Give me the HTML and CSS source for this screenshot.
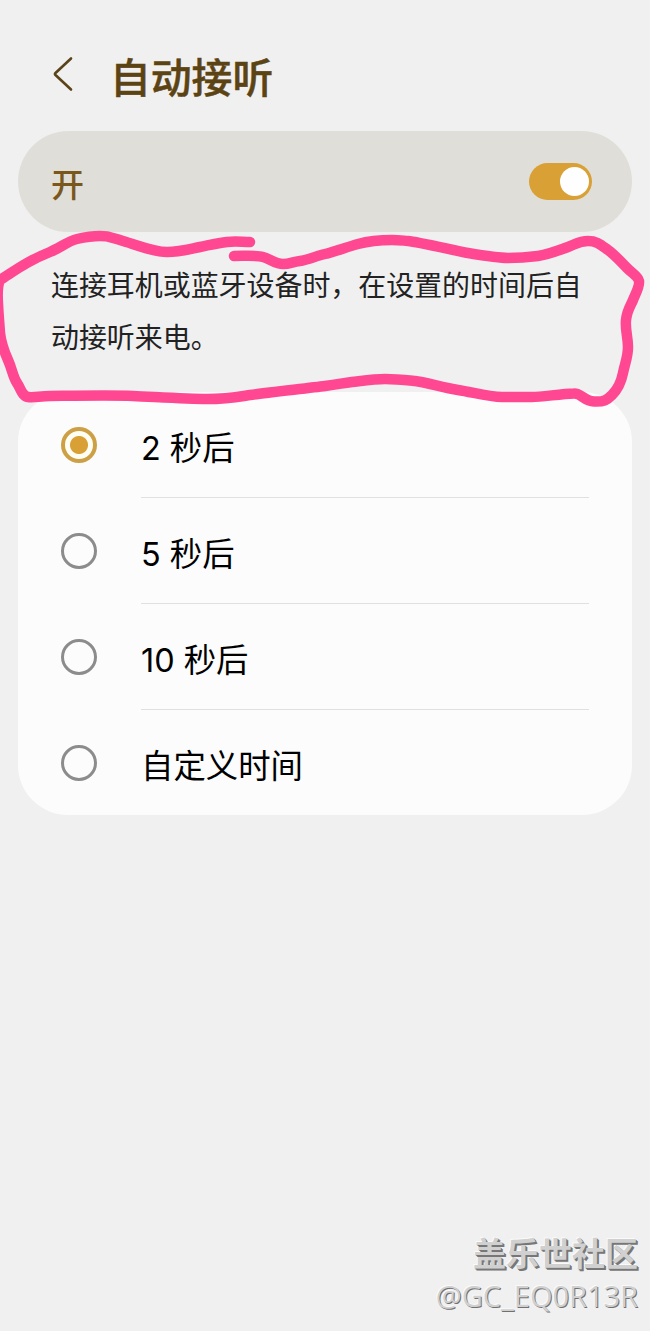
FILE: index.html
```html
<!DOCTYPE html>
<html lang="zh-CN">
<head>
    <meta charset="UTF-8">
    <meta name="viewport" content="width=device-width, initial-scale=1.0">
    <title>自动接听</title>
    <link rel="stylesheet" href="styles.css">
</head>
<body>
    <div class="screen">
        <header class="header">
            <svg class="back-icon" width="24" height="40" viewBox="0 0 24 40">
                <path d="M20 4.5 L4.5 19 Q3.5 20 4.5 21 L20 35.5" />
            </svg>
            <h1>自动接听</h1>
        </header>

        <div class="switch-bar">
            <span class="switch-label">开</span>
            <div class="toggle"><div class="knob"></div></div>
        </div>

        <p class="description">连接耳机或蓝牙设备时，在设置的时间后自动接听来电。</p>

        <div class="options">
            <div class="option">
                <span class="radio checked"></span>
                <span class="option-label">2 秒后</span>
            </div>
            <div class="option">
                <span class="radio"></span>
                <span class="option-label">5 秒后</span>
            </div>
            <div class="option">
                <span class="radio"></span>
                <span class="option-label">10 秒后</span>
            </div>
            <div class="option">
                <span class="radio"></span>
                <span class="option-label">自定义时间</span>
            </div>
        </div>

        <footer class="watermark">
            <div class="community">盖乐世社区</div>
            <div class="author">@GC_EQ0R13R</div>
        </footer>

        <!-- hand-drawn marker round the description -->
        <svg class="marker" width="650" height="200" viewBox="0 220 650 200">
            <path d="M250 242 C242 242 236 241 227 242 S210 245 200 247 S180 252 167 252 S140 246 123 241 S108 236 100 236 S86 237 77 239 S60 248 50 252 S36 258 27 263 S8 275 0 280 C-4 288 -2 305 0 333 C1 342 4 351 8 360 S13 377 17 383 S22 396 28 397 S40 396 50 396 S110 395 133 396 S187 399 207 399 S237 397 250 395 S310 388 325 386 S343 383 352 382 S374 379 385 379 S405 380 415 381 S444 388 458 390 S488 397 502 397 S522 397 532 397 S560 394 574 393.5 C581 393 584 401 594 401.5 S607 400 612 395 S621 383 623 373 S628 357 628 347 S625 330 626 320 S631 305 633 300 S640 286 639 281 S633 274 627 268 S615 255 608 250 S597 241 588 241 S576 244 568 247 S546 255 538 256 S518 258 508 258 S480 255 468 253 S419 242 408 241 S398 240 392 240 S369 241 358 244 S334 252 325 254 S308 260 300 261 S290 264 283 264 S270 259 263 257 S245 256 234 256" />
        </svg>
    </div>
</body>
</html>
```
FILE: styles.css
```css
* {
    margin: 0;
    padding: 0;
    box-sizing: border-box;
}

body {
    font-family: 'Noto Sans CJK SC', sans-serif;
    background: #f0f0f0;
    color: #000;
}

.screen {
    position: relative;
    display: flex;
    flex-direction: column;
    width: 650px;
    height: 1331px;
    padding: 0 18px;
    overflow: hidden;
}

.header {
    display: flex;
    align-items: center;
    gap: 35px;
    height: 131px;
    padding: 20px 0 0 33px;
}

.back-icon {
    margin-top: -4px;
    fill: none;
    stroke: #5a4319;
    stroke-width: 2.6;
    stroke-linecap: round;
}

h1 {
    font-size: 40.8px;
    font-weight: 500;
    line-height: 60px;
    color: #5c4313;
    -webkit-text-stroke: 0.5px #5c4313;
}

.switch-bar {
    display: flex;
    align-items: center;
    justify-content: space-between;
    height: 101px;
    padding: 0 40px 0 33px;
    border-radius: 51px;
    background: #e0ded8;
}

.switch-label {
    font-size: 33px;
    font-weight: 500;
    line-height: 48px;
    padding-top: 3px;
    color: #7a571a;
}

.toggle {
    display: flex;
    justify-content: flex-end;
    width: 63px;
    height: 37px;
    padding: 4px 3px;
    border-radius: 19px;
    background: #d9a035;
}

.knob {
    width: 29px;
    height: 29px;
    border-radius: 50%;
    background: #fefefe;
}

.description {
    height: 160px;
    padding: 26px 33px 0;
    font-size: 27.95px;
    line-height: 52px;
    color: #222;
}

.options {
    height: 423px;
    padding: 0 43px;
    border-radius: 50px;
    background: #fcfcfc;
}

.option {
    display: flex;
    align-items: center;
    gap: 44px;
    height: 106px;
}

.radio {
    width: 36px;
    height: 36px;
    border: 3px solid #8c8c8c;
    border-radius: 50%;
}

.radio.checked {
    border: 4px solid #cda046;
    background: radial-gradient(circle, #d9a035 8.5px, #fffef5 9.5px);
}

.option-label {
    flex: 1;
    height: 106px;
    padding-top: 6px;
    border-bottom: 1px solid #e0e0e0;
    font-family: Inter, 'Noto Sans CJK SC', sans-serif;
    font-size: 32.4px;
    line-height: 101px;
}

.option:last-child .option-label {
    border-bottom: none;
}

.watermark {
    margin-top: auto;
    padding-bottom: 14px;
    text-align: right;
    color: #d0d0d0;
}

.community {
    margin-right: -6px;
    font-size: 33px;
    font-weight: 700;
    line-height: 46px;
    text-shadow: 1px 1px 0 #777, 2px 2px 0 #777, -1px -1px 0 #fafafa;
}

.author {
    margin-right: -6px;
    font-family: 'Open Sans', sans-serif;
    font-size: 29px;
    line-height: 42px;
    text-shadow: 1px 1px 0 #707070, -1px -1px 0 #fafafa;
}

.marker {
    position: absolute;
    top: 220px;
    left: 0;
    fill: none;
    stroke: #ff4891;
    stroke-width: 10.5;
    stroke-linecap: round;
    stroke-linejoin: round;
}
```
